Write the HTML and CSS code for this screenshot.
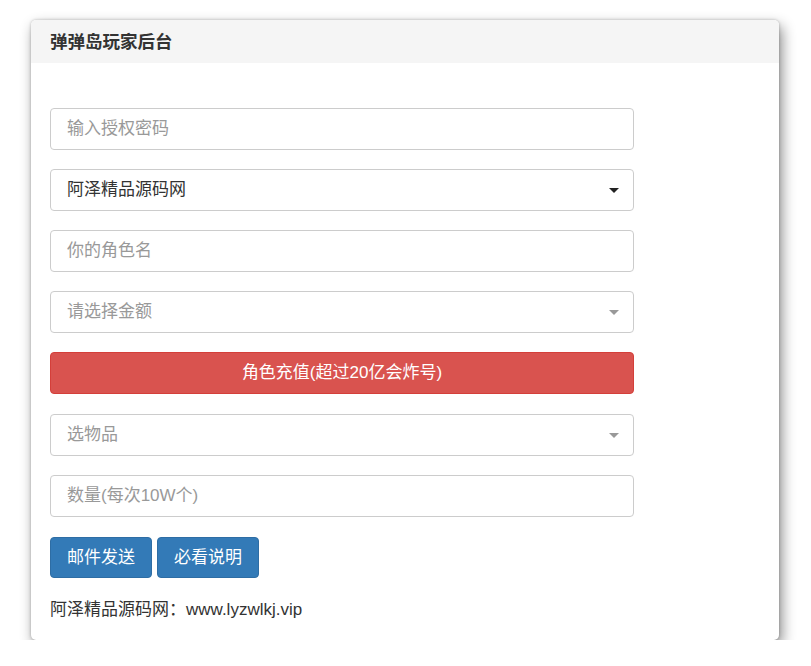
FILE: index.html
```html
<!DOCTYPE html>
<html lang="zh">
<head>
<meta charset="utf-8">
<title>弹弹岛玩家后台</title>
<link rel="stylesheet" href="styles.css">
</head>
<body>
<div class="card">
  <div class="card-head">弹弹岛玩家后台</div>
  <div class="card-body">
    <form class="form">
      <div class="field placeholder">输入授权密码</div>
      <div class="field select">阿泽精品源码网<span class="caret"></span></div>
      <div class="field placeholder">你的角色名</div>
      <div class="field select placeholder">请选择金额<span class="caret gray"></span></div>
      <div class="btn btn-danger btn-block">角色充值(超过20亿会炸号)</div>
      <div class="field select placeholder">选物品<span class="caret gray"></span></div>
      <div class="field placeholder">数量(每次10W个)</div>
      <div class="actions">
        <span class="btn btn-primary">邮件发送</span>
        <span class="btn btn-primary">必看说明</span>
      </div>
      <p class="foot">阿泽精品源码网：www.lyzwlkj.vip</p>
    </form>
  </div>
</div>
</body>
</html>
```
FILE: styles.css
```css
html, body {
  margin: 0;
  background: #fff;
}
body {
  padding: 20px 0 0 31px;
  font-family: "Liberation Sans", "Noto Sans CJK SC", sans-serif;
  font-size: 17px;
  color: #333;
}
.card {
  width: 748px;
  height: 620px;
  box-sizing: border-box;
  border-radius: 5px;
  background: #fff;
  box-shadow: 3px 6px 14px rgba(0,0,0,0.45), 0 0 3px rgba(0,0,0,0.25);
  overflow: hidden;
}
.card-head {
  height: 43px;
  line-height: 45px;
  padding-left: 19px;
  background: #f5f5f5;
  font-weight: bold;
  font-size: 17.5px;
  color: #333;
}
.card-body {
  padding: 45px 19px 0;
}
.form {
  width: 584px;
  display: flex;
  flex-direction: column;
}
.field {
  position: relative;
  height: 42px;
  box-sizing: border-box;
  border: 1px solid #ccc;
  border-radius: 4px;
  padding: 0 16px;
  line-height: 40px;
  margin-bottom: 19px;
  color: #333;
}
.field.placeholder {
  color: #999;
}
.caret {
  position: absolute;
  right: 14px;
  top: 18px;
  width: 0;
  height: 0;
  border-left: 5px solid transparent;
  border-right: 5px solid transparent;
  border-top: 5px solid #222;
}
.caret.gray {
  border-top-color: #999;
}
.btn {
  box-sizing: border-box;
  border-radius: 4px;
  color: #fff;
  text-align: center;
  height: 42px;
  line-height: 40px;
  border: 1px solid transparent;
}
.btn-danger {
  background: #d9534f;
  border-color: #d43f3a;
  margin-bottom: 20px;
}
.btn-primary {
  background: #337ab7;
  border-color: #2e6da4;
  padding: 0 16px;
  height: 41px;
}
.actions {
  display: flex;
  gap: 5px;
  margin-top: 1px;
}
.foot {
  margin: 14px 0 0;
  line-height: 36px;
  color: #333;
}
```
